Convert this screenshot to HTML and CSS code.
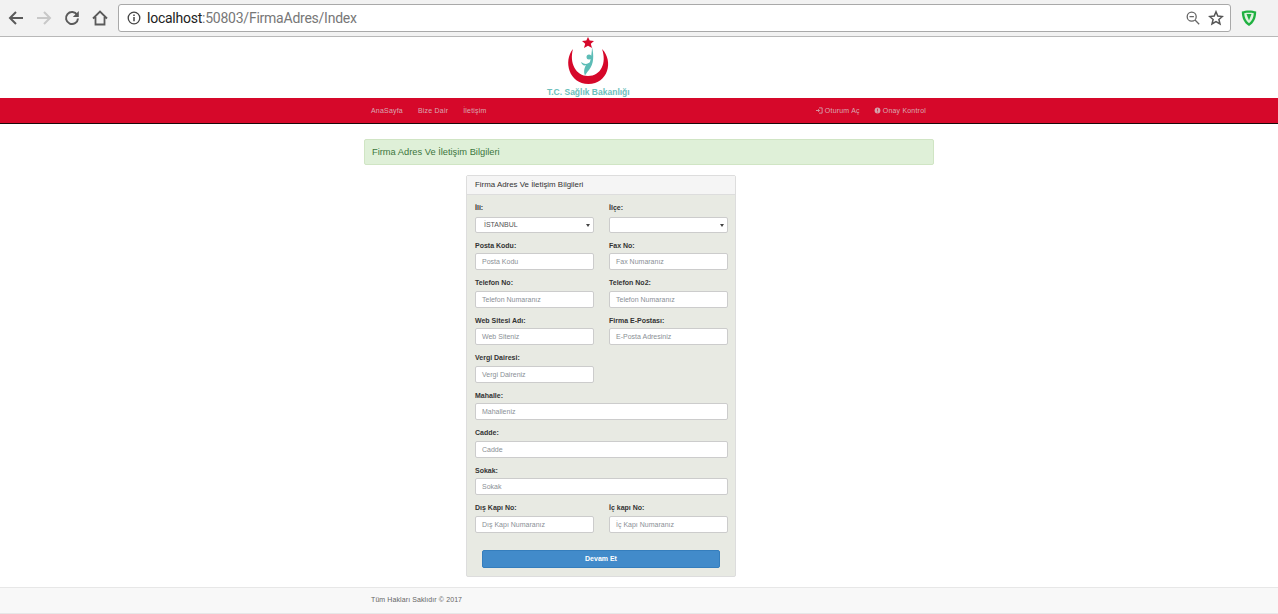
FILE: index.html
```html
<!DOCTYPE html>
<html lang="tr">
<head>
<meta charset="utf-8">
<title>Firma Adres</title>
<link rel="stylesheet" href="styles.css">
</head>
<body>
<div class="chrome">
  <svg class="tb back" viewBox="0 0 16 16"><path d="M15 8H2.500M8 2L2 8l6 6" fill="none" stroke="#5a5a5a" stroke-width="2"/></svg>
  <svg class="tb fwd" viewBox="0 0 16 16"><path d="M1 8h12.500M8 2l6 6-6 6" fill="none" stroke="#c8c8c8" stroke-width="2"/></svg>
  <svg class="tb reload" viewBox="0 0 16 16"><path d="M13.200 5A6 6 0 1 0 14 8.500" fill="none" stroke="#5a5a5a" stroke-width="2"/><path d="M14.800 1v6h-6z" fill="#5a5a5a"/></svg>
  <svg class="tb home" viewBox="0 0 16 16"><path d="M1 8.500L8 1.500l7 7M3.500 7v7.500h9V7" fill="none" stroke="#5a5a5a" stroke-width="1.800"/></svg>
  <div class="omni">
    <svg class="info" viewBox="0 0 14 14"><circle cx="7" cy="7" r="5.800" fill="none" stroke="#444" stroke-width="1.300"/><path d="M7 6v4.200M7 3.600v1.400" stroke="#444" stroke-width="1.500"/></svg>
    <span class="url"><span class="host">localhost</span>:50803/FirmaAdres/Index</span>
    <svg class="zoomi" viewBox="0 0 14 14"><circle cx="5.700" cy="5.700" r="4.500" fill="none" stroke="#666" stroke-width="1.300"/><path d="M3.500 5.700h4.400M9 9l4.200 4.200" stroke="#666" stroke-width="1.300"/></svg>
    <svg class="star" viewBox="0 0 16 16"><path d="M8 1.800l1.800 4.300 4.600.4-3.500 3 1.100 4.500L8 11.600l-4 2.400 1.100-4.500-3.500-3 4.600-.4z" fill="none" stroke="#555" stroke-width="1.500"/></svg>
  </div>
  <svg class="shield" viewBox="0 0 16 18"><path d="M.8 2.500C5 1 11 1 15.200 2.500C15.200 9 13 14 8 17C3 14 .8 9 .8 2.500z" fill="#1fb141"/><path d="M3.200 4.300C6 3.700 10 3.700 12.800 4.300C12.600 8.500 11 12 8 14.300C5 12 3.400 8.500 3.200 4.300z" fill="#dff3df"/><path d="M5.500 5h5L8 11.500z" fill="#1fb141"/></svg>
</div>

<header class="brand">
  <div class="logo">
    <svg class="mark" viewBox="0 0 82 50">
      <path d="M41 0l1.700 3.600 4.300.3-3.200 2.800 1.200 4.400L41 8.700l-4 2.400 1.200-4.400L35 3.900l4.300-.3z" fill="#d6082a"/>
      <path d="M26 12C16 24 22 47 41.500 47C61 47 67 24 55 12C60 26 54 39 41 39C29 39 22 26 26 12z" fill="#d6082a"/>
      <circle cx="42" cy="20" r="2.500" fill="#5cbcb6"/>
      <path d="M34 25C38 28 41 27 43 25C44 20 45 15 45 10C47 18 47 27 42 33C40 35 39 37 38 38.500C36 34 38 30 39 28C37 29 35 28 34 25z" fill="#5cbcb6"/>
    </svg>
    <span class="logotext">T.C. Sağlık Bakanlığı</span>
  </div>
</header>

<nav class="navbar">
  <div class="navin">
    <div class="navgroup">
      <a>AnaSayfa</a><a>Bize Dair</a><a>İletişim</a>
    </div>
    <div class="navgroup right">
      <a><svg class="ni" viewBox="0 0 8 8"><path d="M0 4h3.500M2.300 2.500L4 4 2.300 5.500M3.500 1H7v6H3.500" fill="none" stroke="#d3a3ab" stroke-width="1"/></svg>Oturum Aç</a>
      <a><svg class="ni" viewBox="0 0 8 8"><circle cx="4" cy="4" r="3.300" fill="#d3a3ab"/><path d="M4 2v2.500M4 5.300v.9" stroke="#d6082a" stroke-width=".8"/></svg>Onay Kontrol</a>
    </div>
  </div>
</nav>

<main class="content">
  <div class="alert">Firma Adres Ve İletişim Bilgileri</div>
  <section class="panel">
    <div class="panel-head">Firma Adres Ve İletişim Bilgileri</div>
    <form class="panel-body">
      <div class="field"><label>İli:</label><div class="ctl sel">İSTANBUL<i class="caret"></i></div></div>
      <div class="field"><label>İlçe:</label><div class="ctl sel"><i class="caret"></i></div></div>
      <div class="field"><label>Posta Kodu:</label><div class="ctl">Posta Kodu</div></div>
      <div class="field"><label>Fax No:</label><div class="ctl">Fax Numaranız</div></div>
      <div class="field"><label>Telefon No:</label><div class="ctl">Telefon Numaranız</div></div>
      <div class="field"><label>Telefon No2:</label><div class="ctl">Telefon Numaranız</div></div>
      <div class="field"><label>Web Sitesi Adı:</label><div class="ctl">Web Siteniz</div></div>
      <div class="field"><label>Firma E-Postası:</label><div class="ctl">E-Posta Adresiniz</div></div>
      <div class="field"><label>Vergi Dairesi:</label><div class="ctl">Vergi Daireniz</div></div>
      <div class="field wide"><label>Mahalle:</label><div class="ctl">Mahalleniz</div></div>
      <div class="field wide"><label>Cadde:</label><div class="ctl">Cadde</div></div>
      <div class="field wide"><label>Sokak:</label><div class="ctl">Sokak</div></div>
      <div class="field"><label>Dış Kapı No:</label><div class="ctl">Dış Kapı Numaranız</div></div>
      <div class="field"><label>İç kapı No:</label><div class="ctl">İç Kapı Numaranız</div></div>
      <button type="button" class="submit">Devam Et</button>
    </form>
  </section>
</main>

<footer class="foot"><div class="footin">Tüm Hakları Saklıdır © 2017</div></footer>
</body>
</html>
```
FILE: styles.css
```css
* { box-sizing: border-box; }
html, body { margin: 0; padding: 0; }
body { height: 614px; overflow: hidden; background: #fff; font-family: "Liberation Sans", Arial, sans-serif; font-size: 7px; color: #333; }

.chrome { height: 37px; background: #f2f2f2; border-bottom: 1px solid #b8b8b8; display: flex; align-items: center; padding: 0 0 0 8px; }
.tb { width: 16px; height: 16px; flex: none; }
.fwd, .reload, .home { margin-left: 12px; }
.omni { margin-left: 10px; width: 1113px; height: 28px; background: #fff; border: 1px solid #a9a9a9; border-radius: 3px; display: flex; align-items: center; padding: 0 6px 0 8px; }
.info { width: 14px; height: 14px; flex: none; }
.url { margin-left: 6px; font-family: Roboto, sans-serif; font-size: 14px; letter-spacing: -.24px; color: #777; flex: 1; white-space: nowrap; }
.host { color: #222; }
.zoomi { width: 14px; height: 14px; flex: none; }
.star { width: 16px; height: 16px; margin-left: 8px; flex: none; }
.shield { width: 16px; height: 18px; margin-left: 10px; flex: none; }

.brand { height: 61px; padding-left: 547px; }
.logo { width: 82px; height: 61px; }
.mark { display: block; width: 82px; height: 50px; }
.logotext { display: block; font-size: 8.500px; font-weight: bold; color: #6cc0bb; white-space: nowrap; line-height: 11px; text-align: center; }

.navbar { height: 26px; background: #d6082a; border-bottom: 1px solid #1a0a0a; padding-left: 364px; }
.navin { width: 570px; padding: 0 8px 0 7px; height: 25px; display: flex; justify-content: space-between; align-items: center; }
.navgroup { display: flex; gap: 15px; }
.navgroup.right { gap: 14px; }
.navgroup a { color: #d8aab2; font-size: 7px; letter-spacing: .2px; display: flex; align-items: center; gap: 1px; }
.ni { width: 7px; height: 7px; margin-right: 1px; }

.content { width: 570px; margin: 15px 0 0 364px; height: 448px; }
.alert { height: 26px; background: #dff0d8; border: 1px solid #d0e5c4; border-radius: 2px; color: #3c763d; font-size: 9.300px; line-height: 24px; padding-left: 7px; }
.panel { width: 270px; height: 402px; margin: 10px 0 0 102px; background: #e8eae3; border: 1px solid #ddd; border-radius: 2px; }
.panel-head { height: 19px; background: #f5f5f5; border-bottom: 1px solid #ddd; color: #333; font-size: 7.900px; line-height: 17px; padding-left: 8px; }
.panel-body { display: grid; grid-template-columns: 119px 119px; column-gap: 15px; grid-auto-rows: 37.500px; padding: 8px 0 0 8px; }
.field label { display: block; height: 12.500px; line-height: 10px; font-size: 7px; font-weight: bold; color: #333; }
.ctl { height: 17px; background: #fff; border: 1px solid #ccc; border-radius: 2px; font-size: 7px; line-height: 15px; color: #8a8f96; padding-left: 6px; position: relative; }
.sel { height: 16px; margin-top: 1.500px; color: #555; padding-left: 8px; line-height: 14px; }
.caret { position: absolute; right: 3px; top: 6px; border-top: 3px solid #444; border-left: 2px solid transparent; border-right: 2px solid transparent; }
.field:nth-child(9) { grid-column: 1; }
.wide { grid-column: 1 / span 2; }
.submit { grid-column: 1 / span 2; margin: 9px 0 0 7px; width: 238px; height: 18px; background: #428bca; border: 1px solid #357ebd; border-radius: 2px; color: #fff; font: bold 7px "Liberation Sans", Arial, sans-serif; padding: 0; }

.foot { height: 27px; background: #f8f8f8; border-top: 1px solid #e7e7e7; border-bottom: 1px solid #e7e7e7; padding-left: 364px; }
.footin { width: 570px; padding-left: 7px; line-height: 24px; font-size: 7px; color: #666; letter-spacing: .1px; }
```
